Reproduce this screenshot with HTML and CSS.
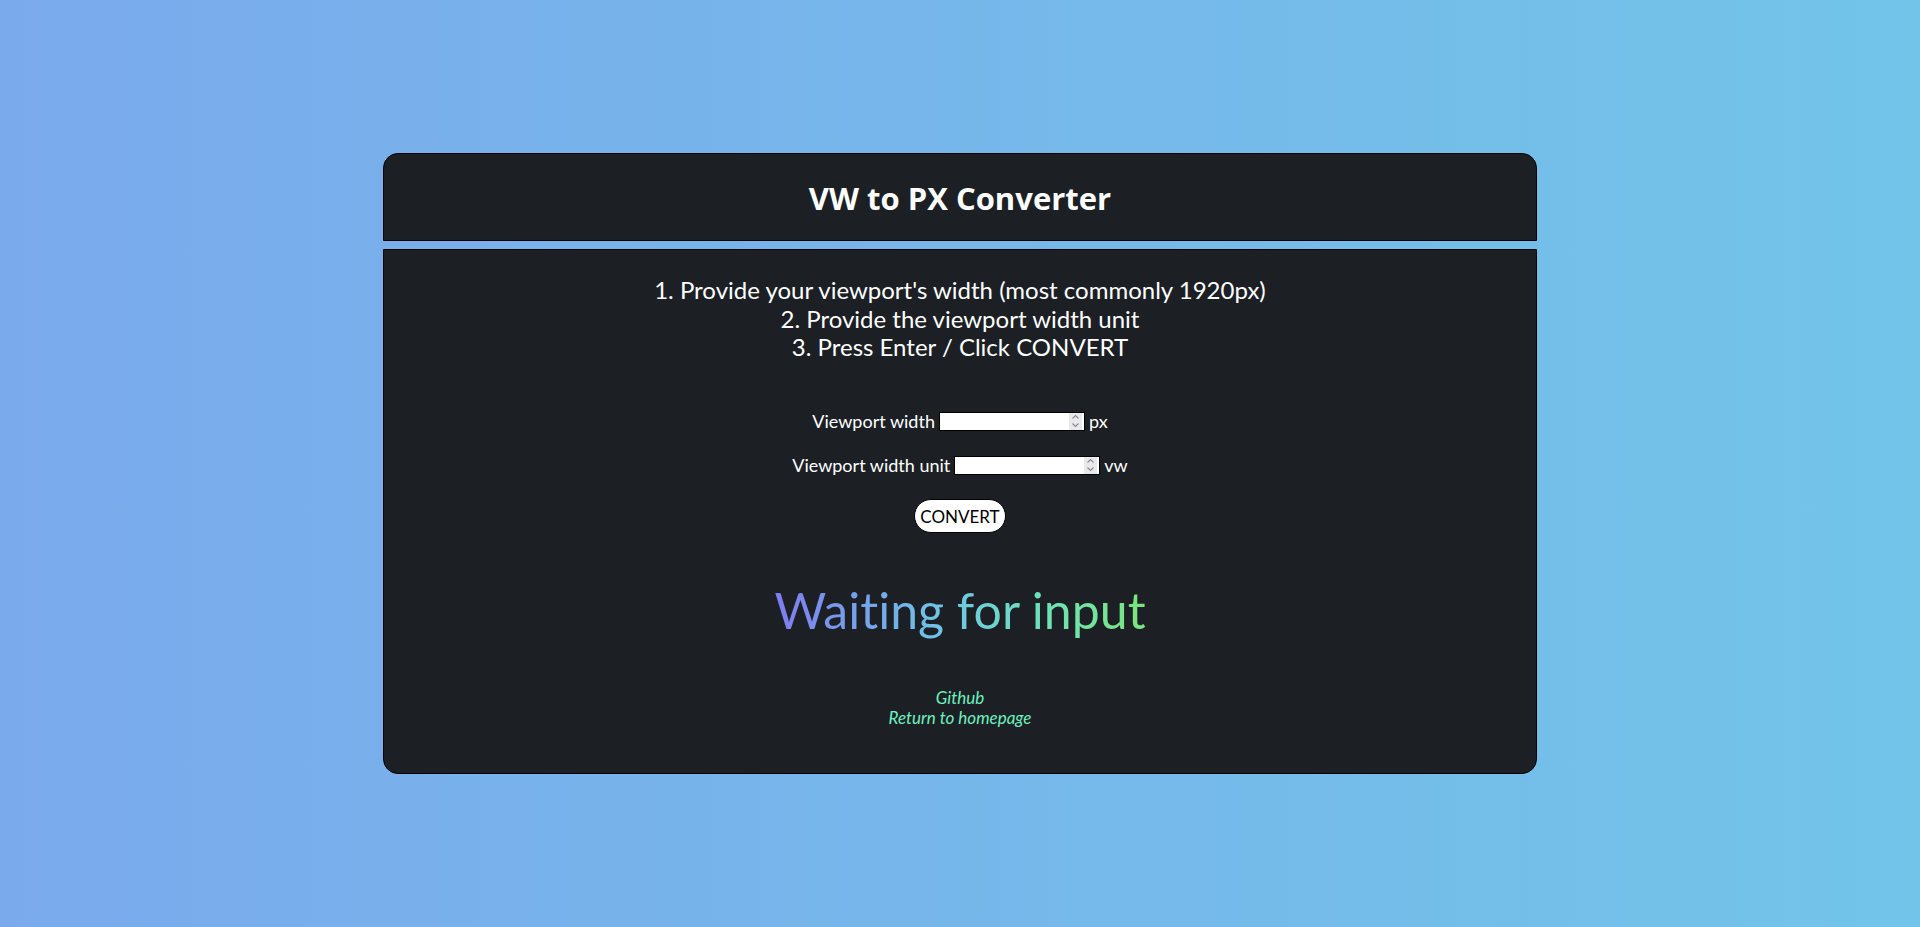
FILE: index.html
```html
<!DOCTYPE html>
<html lang="en">
<head>
<meta charset="utf-8">
<title>VW to PX Converter</title>
<link rel="stylesheet" href="styles.css">
</head>
<body>
<div class="card">
  <header class="card-header">
    <h1 class="title">VW to PX Converter</h1>
  </header>
  <main class="card-body">
    <div class="steps">
      <div>1. Provide your viewport's width (most commonly 1920px)</div>
      <div>2. Provide the viewport width unit</div>
      <div>3. Press Enter / Click CONVERT</div>
    </div>
    <form class="form" onsubmit="return false">
      <div class="row row-first">
        <label for="vw-width">Viewport width</label>
        <span class="field">
          <input id="vw-width" class="num" type="number">
          <span class="spin" aria-hidden="true">
            <svg width="9" height="14" viewBox="0 0 9 14"><path d="M1.5 4.5 L4.5 1.5 L7.5 4.5 M1.5 9.5 L4.5 12.5 L7.5 9.5" fill="none" stroke="#8a8a8e" stroke-width="1.1"/></svg>
          </span>
        </span>
        <span>px</span>
      </div>
      <div class="row">
        <label for="vw-unit">Viewport width unit</label>
        <span class="field">
          <input id="vw-unit" class="num" type="number">
          <span class="spin" aria-hidden="true">
            <svg width="9" height="14" viewBox="0 0 9 14"><path d="M1.5 4.5 L4.5 1.5 L7.5 4.5 M1.5 9.5 L4.5 12.5 L7.5 9.5" fill="none" stroke="#8a8a8e" stroke-width="1.1"/></svg>
          </span>
        </span>
        <span>vw</span>
      </div>
      <button class="convert" type="submit">CONVERT</button>
    </form>
    <div class="result">Waiting for input</div>
    <div class="links">
      <a href="#">Github</a>
      <a href="#">Return to homepage</a>
    </div>
  </main>
</div>
</body>
</html>
```

FILE: styles.css
```css
* { box-sizing: border-box; }

html, body { height: 100%; }

body {
  margin: 0;
  min-height: 100vh;
  display: flex;
  align-items: center;
  justify-content: center;
  background: linear-gradient(to right, #7aaaec, #72c4e9);
  font-family: "Lato", "Liberation Sans", sans-serif;
  color: #fff;
  font-variant-ligatures: none;
}

.card {
  width: 1154px;
  display: flex;
  flex-direction: column;
  gap: 8px;
}

.card-header {
  height: 88px;
  background: #1c2025;
  border: 1px solid #000;
  border-radius: 15px 15px 0 0;
  display: flex;
  align-items: center;
  justify-content: center;
  padding-top: 2px;
}

.title {
  margin: 0;
  font-family: "Open Sans", "Liberation Sans", sans-serif;
  font-weight: 700;
  font-size: 31px;
  color: #fff;
}

.card-body {
  background: #1c2025;
  border: 1px solid #000;
  border-radius: 0 0 15px 15px;
  padding: 26px 0 46px;
  display: flex;
  flex-direction: column;
  align-items: center;
  text-align: center;
}

.steps {
  font-size: 24px;
  line-height: 28.8px;
}

.form {
  display: flex;
  flex-direction: column;
  align-items: center;
}

.row {
  height: 22px;
  display: flex;
  align-items: center;
  font-size: 18px;
  margin-top: 22px;
}

.row-first { margin-top: 48px; }

.row label { margin-right: 4px; }
.row > span:last-child { margin-left: 4px; }

.field {
  position: relative;
  display: flex;
}

.num {
  width: 146px;
  height: 19px;
  border: 1px solid #000;
  background: #fff;
  padding: 1px 2px;
  font-size: 13px;
  font-family: "Lato", sans-serif;
  border-radius: 0;
  -moz-appearance: textfield;
}

.num::-webkit-inner-spin-button,
.num::-webkit-outer-spin-button {
  -webkit-appearance: none;
  margin: 0;
}

.spin {
  position: absolute;
  top: 1px;
  bottom: 1px;
  right: 3px;
  width: 13px;
  background: #e9e9ed;
  display: flex;
  align-items: center;
  justify-content: center;
}

.convert {
  margin-top: 23px;
  height: 34px;
  padding: 0 5px;
  background: #fff;
  color: #000;
  border: 1px solid #000;
  border-radius: 17px;
  font-family: "Lato", sans-serif;
  font-size: 17px;
}

.result {
  margin-top: 46px;
  font-size: 50px;
  line-height: 62px;
  background: linear-gradient(to right, #7f7cf0, #6fc5e6 45%, #6fe3b4 75%, #7ae57a);
  -webkit-background-clip: text;
  background-clip: text;
  color: transparent;
}

.links {
  margin-top: 47px;
  display: flex;
  flex-direction: column;
  align-items: center;
  font-size: 17px;
  line-height: 19.5px;
  font-style: italic;
}

.links a {
  color: #6ff0bf;
  text-decoration: none;
}
```
